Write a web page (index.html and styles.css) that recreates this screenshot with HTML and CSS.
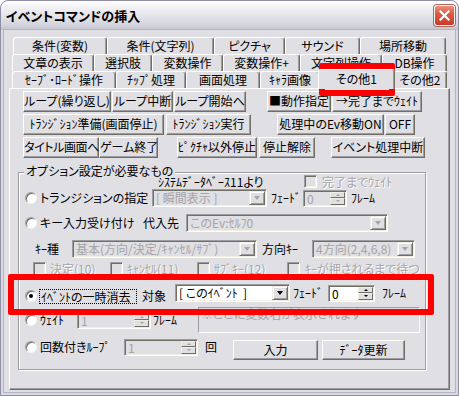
FILE: index.html
```html
<!DOCTYPE html>
<html lang="ja">
<head>
<meta charset="utf-8">
<title>イベントコマンドの挿入</title>
<link rel="stylesheet" href="styles.css">
</head>
<body>
<div class="window">
  <div class="titlebar">
    <span class="title">イベントコマンドの挿入</span>
    <span class="close"><svg width="11" height="11" viewBox="0 0 11 11"><path d="M1.5 1.5 L9.5 9.5 M9.5 1.5 L1.5 9.5" stroke="#fff" stroke-width="2.2" stroke-linecap="square" fill="none"/></svg></span>
  </div>
  <div class="client">
    <div class="tabs">
      <div class="tabrow r1">
        <div class="tab">条件(変数)</div>
        <div class="tab">条件(文字列)</div>
        <div class="tab">ピクチャ</div>
        <div class="tab">サウンド</div>
        <div class="tab">場所移動</div>
      </div>
      <div class="tabrow r2">
        <div class="tab">文章の表示</div>
        <div class="tab">選択肢</div>
        <div class="tab">変数操作</div>
        <div class="tab">変数操作+</div>
        <div class="tab">文字列操作</div>
        <div class="tab">DB操作</div>
      </div>
      <div class="tabrow r3">
        <div class="tab">ｾｰﾌﾞ･ﾛｰﾄﾞ操作</div>
        <div class="tab">ﾁｯﾌﾟ処理</div>
        <div class="tab">画面処理</div>
        <div class="tab">ｷｬﾗ画像</div>
        <div class="tab sel">その他1</div>
        <div class="tab">その他2</div>
      </div>
      <div class="panel">
        <div class="btnrow">
          <div class="btn w88">ループ(繰り返し)</div>
          <div class="btn w61 ml1">ループ中断</div>
          <div class="btn w72 ml1">ループ開始へ</div>
          <div class="btn w64 ml21">■動作指定</div>
          <div class="btn w90 ml1">→完了までｳｪｲﾄ</div>
        </div>
        <div class="btnrow">
          <div class="btn w141">ﾄﾗﾝｼﾞｼｮﾝ準備(画面停止)</div>
          <div class="btn w85 ml2">ﾄﾗﾝｼﾞｼｮﾝ実行</div>
          <div class="btn w107 ml26">処理中のEv移動ON</div>
          <div class="btn w30 ml1">OFF</div>
        </div>
        <div class="btnrow">
          <div class="btn w76 tight">タイトル画面へ</div>
          <div class="btn w59">ゲーム終了</div>
          <div class="btn w80 ml19">ﾋﾟｸﾁｬ以外停止</div>
          <div class="btn w56 ml2">停止解除</div>
          <div class="btn w94 ml16">イベント処理中断</div>
        </div>

        <div class="group">
          <span class="legend">オプション設定が必要なもの</span>

          <div class="grow g0">
            <span class="txt w146 ml139">ｼｽﾃﾑﾃﾞｰﾀﾍﾞｰｽ11より</span>
            <span class="chk"></span>
            <span class="txt dis emb ml5">完了までｳｪｲﾄ</span>
          </div>

          <div class="grow g1">
            <span class="radio ml6"></span>
            <span class="txt w112 ml3">トランジションの指定</span>
            <div class="combo w115"><span class="val">[ 瞬間表示 ]</span><span class="dd"><i class="tri"></i></span></div>
            <span class="txt w32 ml4">ﾌｪｰﾄﾞ</span>
            <div class="spin w44"><span class="val">0</span><span class="sb"><i class="up"></i><i class="dn"></i></span></div>
            <span class="txt ml4">ﾌﾚｰﾑ</span>
          </div>

          <div class="grow g2">
            <span class="radio ml6"></span>
            <span class="txt w103 ml3">キー入力受け付け</span>
            <span class="txt w43">代入先</span>
            <div class="combo w202"><span class="val">このEv:ｾﾙﾌ0</span><span class="dd"><i class="tri"></i></span></div>
          </div>

          <div class="grow g3">
            <span class="txt w37 ml16">ｷｰ種</span>
            <div class="combo w185"><span class="val">基本(方向/決定/ｷｬﾝｾﾙ/ｻﾌﾞ)</span><span class="dd"><i class="tri"></i></span></div>
            <span class="txt w50 ml5">方向ｷｰ</span>
            <div class="combo w103"><span class="val">4方向(2,4,6,8)</span><span class="dd"><i class="tri"></i></span></div>
          </div>

          <div class="grow g4">
            <span class="chk ml14"></span>
            <span class="txt dis emb w60 ml4">決定(10)</span>
            <span class="chk"></span>
            <span class="txt dis emb w70 ml4">ｷｬﾝｾﾙ(11)</span>
            <span class="chk"></span>
            <span class="txt dis emb w73 ml4">ｻﾌﾞｷｰ(12)</span>
            <span class="chk"></span>
            <span class="txt dis emb ml5">ｷｰが押されるまで待つ</span>
          </div>

          <div class="grow g5">
            <span class="radio on ml6 low"></span>
            <span class="focus w98 ml2 low">ｲﾍﾞﾝﾄの一時消去</span>
            <span class="txt w33 ml5 low">対象</span>
            <div class="combo en w115"><span class="val">[ このｲﾍﾞﾝﾄ&nbsp;&nbsp;]</span><span class="dd"><i class="tri"></i></span></div>
            <span class="txt w35 ml3">ﾌｪｰﾄﾞ</span>
            <div class="spin en w47"><span class="val">0</span><span class="sb"><i class="up"></i><i class="dn"></i></span></div>
            <span class="txt ml7">ﾌﾚｰﾑ</span>
          </div>

          <div class="grow g6">
            <span class="radio ml6"></span>
            <span class="txt w37 ml3">ｳｪｲﾄ</span>
            <div class="spin w74"><span class="val">1</span><span class="sb"><i class="up"></i><i class="dn"></i></span></div>
            <span class="txt w45 ml2">ﾌﾚｰﾑ</span>
            <div class="note w222">※ここに変数名が表示されます</div>
          </div>

          <div class="grow g7">
            <div class="sub">
              <span class="radio ml6"></span>
              <span class="txt w84 ml3">回数付きﾙｰﾌﾟ</span>
              <div class="spin w74"><span class="val">1</span><span class="sb"><i class="up"></i><i class="dn"></i></span></div>
              <span class="txt w28 ml7">回</span>
            </div>
            <div class="btn w85 mt1 h20">入力</div>
            <div class="btn w83 ml4 mt1 h20">ﾃﾞｰﾀ更新</div>
          </div>
        </div>
      </div>
    </div>
  </div>
  <div class="mark mark-tab"></div>
  <div class="mark mark-row"></div>
</div>
</body>
</html>
```

FILE: styles.css
```css
* { box-sizing: border-box; }
html, body { margin: 0; padding: 0; }
body {
  background: #ffffff;
  font-family: "Noto Sans CJK JP", "Noto Sans", sans-serif;
  font-size: 12px;
  font-feature-settings: "palt" 1;
  color: #000;
  line-height: 14px;
}

/* window frame */
.window {
  position: relative;
  width: 459px;
  height: 396px;
  border: 1px solid #8e8ea2;
  border-radius: 8px 8px 0 0;
  background: #d9d9e3;
  display: flex;
  flex-direction: column;
  overflow: hidden;
}
.titlebar {
  flex: none;
  height: 29px;
  display: flex;
  align-items: center;
  justify-content: space-between;
  padding: 0 3px 0 5px;
  border-radius: 7px 7px 0 0;
  background: linear-gradient(#ffffff 0%, #f4f4f7 18%, #e4e4ea 50%, #d4d4de 82%, #c2c2d0 100%);
}
.title {
  font-weight: bold;
  font-size: 13px;
  line-height: 16px;
}
.close {
  width: 21px;
  height: 21px;
  border-radius: 3px;
  border: 1px solid #f4f4f4;
  box-shadow: 0 0 0 1px #b0675e;
  background: linear-gradient(#ec8f7c 0%, #de5a45 40%, #c93b27 100%);
  display: flex;
  align-items: center;
  justify-content: center;
}
.client {
  flex: 1;
  margin: 0 3px 3px;
  background: #e0dfe3;
  box-shadow: 0 0 0 1px #b4b4c4;
  padding: 7px 0 0 5px;
}

/* tab control */
.tabs { width: 441px; }
.tabrow { display: grid; height: 17px; }
.r1 { margin-left: 4px; grid-template-columns: 94px 107px 71px 75px 86px; }
.r2 { margin-left: 3px; grid-template-columns: 82px 58px 71px 77px 82px 65px; }
.r3 { margin-left: 3px; grid-template-columns: 104px 70px 74px 60px 73px 54px; }
.tab {
  height: 17px;
  background: #e0dfe3;
  border-top: 1px solid #fff;
  border-left: 1px solid #fff;
  border-right: 1px solid #716f64;
  box-shadow: inset -1px 0 #9d9da1;
  border-radius: 3px 3px 0 0;
  text-align: center;
  line-height: 15px;
  white-space: nowrap;
}
.tab.sel {
  position: relative;
  z-index: 1;
  margin: -2px -2px 0;
  height: 20px;
  line-height: 17px;
}
.panel {
  height: 302px;
  background: #e0dfe3;
  border: 1px solid;
  border-color: #fff #716f64 #716f64 #fff;
  box-shadow: inset -1px -1px #9d9da1;
}

/* push buttons */
.btnrow {
  display: flex;
  height: 21px;
  margin-top: 2px;
  padding-left: 13px;
}
.btn {
  flex: none;
  height: 21px;
  background: #e0dfe3;
  border: 1px solid;
  border-color: #fff #716f64 #716f64 #fff;
  box-shadow: inset -1px -1px #9d9da1;
  text-align: center;
  line-height: 18px;
  white-space: nowrap;
}
.btn.h20 { height: 20px; line-height: 17px; }
.btn.tight { letter-spacing: -0.4px; }

/* group box */
.group {
  position: relative;
  margin: 14px 0 0 8px;
  width: 408px;
  height: 198px;
  border: 1px solid #9d9da1;
  box-shadow: inset 1px 1px #fff, 1px 1px #fff;
}
.legend {
  position: absolute;
  left: 5px;
  top: -9px;
  padding: 0 2px;
  background: #e0dfe3;
  line-height: 14px;
  white-space: nowrap;
}
.grow { display: flex; align-items: center; }
.g0 { margin-top: 2px; height: 13px; }
.g1 { margin-top: 1px; height: 18px; }
.g2 { margin-top: 7px; height: 18px; }
.g3 { margin-top: 8px; height: 18px; }
.g4 { margin-top: 4px; height: 13px; }
.g5 { margin-top: 9px; height: 18px; }
.g6 { margin-top: 5px; height: 26px; }
.g7 { margin-top: 6px; height: 21px; align-items: flex-start; }
.sub { display: flex; align-items: center; height: 16px; }
.low { margin-top: 6px; }

.txt { flex: none; white-space: nowrap; line-height: 14px; }
.dis { color: #a5a4a8; }
.emb { text-shadow: 1px 1px 0 #fff; }

/* radio / checkbox */
.radio {
  flex: none;
  position: relative;
  width: 12px;
  height: 12px;
  border-radius: 50%;
  background: #fff;
  border: 1px solid;
  border-color: #9d9da1 #f4f4f4 #f4f4f4 #9d9da1;
  box-shadow: inset 1px 1px #716f64;
}
.radio.on::after {
  content: "";
  position: absolute;
  left: 3px;
  top: 3px;
  width: 4px;
  height: 4px;
  border-radius: 50%;
  background: #000;
}
.chk {
  flex: none;
  width: 13px;
  height: 13px;
  background: #e0dfe3;
  border: 1px solid;
  border-color: #9d9da1 #fff #fff #9d9da1;
  box-shadow: inset 1px 1px #716f64, inset -1px -1px #f1efe2;
}
.focus {
  flex: none;
  height: 15px;
  line-height: 13px;
  border: 1px dotted #000;
  padding: 0 1px;
  white-space: nowrap;
}

/* combo box */
.combo {
  flex: none;
  display: flex;
  height: 18px;
  padding: 1px;
  background: #e0dfe3;
  border: 1px solid;
  border-color: #9d9da1 #fff #fff #9d9da1;
  box-shadow: inset 1px 1px #716f64, inset -1px -1px #f1efe2;
}
.combo.en { background: #fff; }
.combo .val {
  flex: 1;
  min-width: 0;
  padding: 0 0 0 2px;
  line-height: 14px;
  white-space: nowrap;
  color: #a5a4a8;
}
.combo.en .val { color: #000; }
.dd {
  flex: none;
  width: 16px;
  height: 14px;
  background: #e0dfe3;
  border: 1px solid;
  border-color: #f1efe2 #716f64 #716f64 #f1efe2;
  box-shadow: inset 1px 1px #fff, inset -1px -1px #9d9da1;
  display: flex;
  align-items: center;
  justify-content: center;
}
.tri {
  display: block;
  width: 0;
  height: 0;
  border-left: 3.5px solid transparent;
  border-right: 3.5px solid transparent;
  border-top: 4px solid #a5a4a8;
}
.combo.en .tri { border-top-color: #000; }

/* spin edit */
.spin {
  flex: none;
  display: flex;
  height: 17px;
  padding: 1px;
  background: #e0dfe3;
  border: 1px solid;
  border-color: #9d9da1 #fff #fff #9d9da1;
  box-shadow: inset 1px 1px #716f64, inset -1px -1px #f1efe2;
}
.spin.en { background: #fff; }
.spin .val {
  flex: 1;
  padding-left: 2px;
  line-height: 13px;
  color: #a5a4a8;
}
.spin.en .val { color: #000; }
.sb {
  flex: none;
  width: 15px;
  display: flex;
  flex-direction: column;
}
.sb i {
  flex: 1;
  display: flex;
  align-items: center;
  justify-content: center;
  background: #e0dfe3;
  border: 1px solid;
  border-color: #f1efe2 #716f64 #716f64 #f1efe2;
}
.sb i::after {
  content: "";
  width: 0;
  height: 0;
  border-left: 2px solid transparent;
  border-right: 2px solid transparent;
}
.sb .up::after { border-bottom: 2px solid #a5a4a8; }
.sb .dn::after { border-top: 2px solid #a5a4a8; }
.spin.en .sb .up::after { border-bottom-color: #000; }
.spin.en .sb .dn::after { border-top-color: #000; }

/* static info box */
.note {
  flex: none;
  height: 26px;
  padding: 0 2px;
  border: 1px solid;
  border-color: #9d9da1 #fff #fff #9d9da1;
  color: #a5a4a8;
  line-height: 11px;
  white-space: nowrap;
}

/* annotation marks */
.mark {
  position: absolute;
  border: 6px solid #ff0000;
  border-radius: 2px;
}
.mark-tab { left: 318px; top: 62px; width: 76px; height: 33px; }
.mark-row { left: 7px; top: 273px; width: 426px; height: 41px; }

/* sizing utilities */
.w28 { width: 28px; } .w30 { width: 30px; } .w32 { width: 32px; } .w33 { width: 33px; }
.w35 { width: 35px; } .w37 { width: 37px; } .w43 { width: 43px; } .w44 { width: 44px; }
.w45 { width: 45px; } .w47 { width: 47px; } .w50 { width: 50px; } .w56 { width: 56px; }
.w59 { width: 59px; } .w60 { width: 60px; } .w61 { width: 61px; } .w64 { width: 64px; }
.w70 { width: 70px; } .w72 { width: 72px; } .w73 { width: 73px; } .w74 { width: 74px; }
.w76 { width: 76px; } .w80 { width: 80px; } .w83 { width: 83px; } .w84 { width: 84px; }
.w85 { width: 85px; } .w88 { width: 88px; } .w90 { width: 90px; } .w94 { width: 94px; }
.w98 { width: 98px; } .w103 { width: 103px; } .w107 { width: 107px; } .w112 { width: 112px; }
.w115 { width: 115px; } .w141 { width: 141px; } .w146 { width: 146px; } .w185 { width: 185px; }
.w202 { width: 202px; } .w222 { width: 222px; }
.ml1 { margin-left: 1px; } .ml2 { margin-left: 2px; } .ml3 { margin-left: 3px; }
.ml4 { margin-left: 4px; } .ml5 { margin-left: 5px; } .ml6 { margin-left: 6px; }
.ml7 { margin-left: 7px; } .ml14 { margin-left: 14px; } .ml16 { margin-left: 16px; }
.ml19 { margin-left: 19px; } .ml21 { margin-left: 21px; } .ml26 { margin-left: 26px; }
.ml139 { margin-left: 139px; }
.mt1 { margin-top: 1px; }
```
